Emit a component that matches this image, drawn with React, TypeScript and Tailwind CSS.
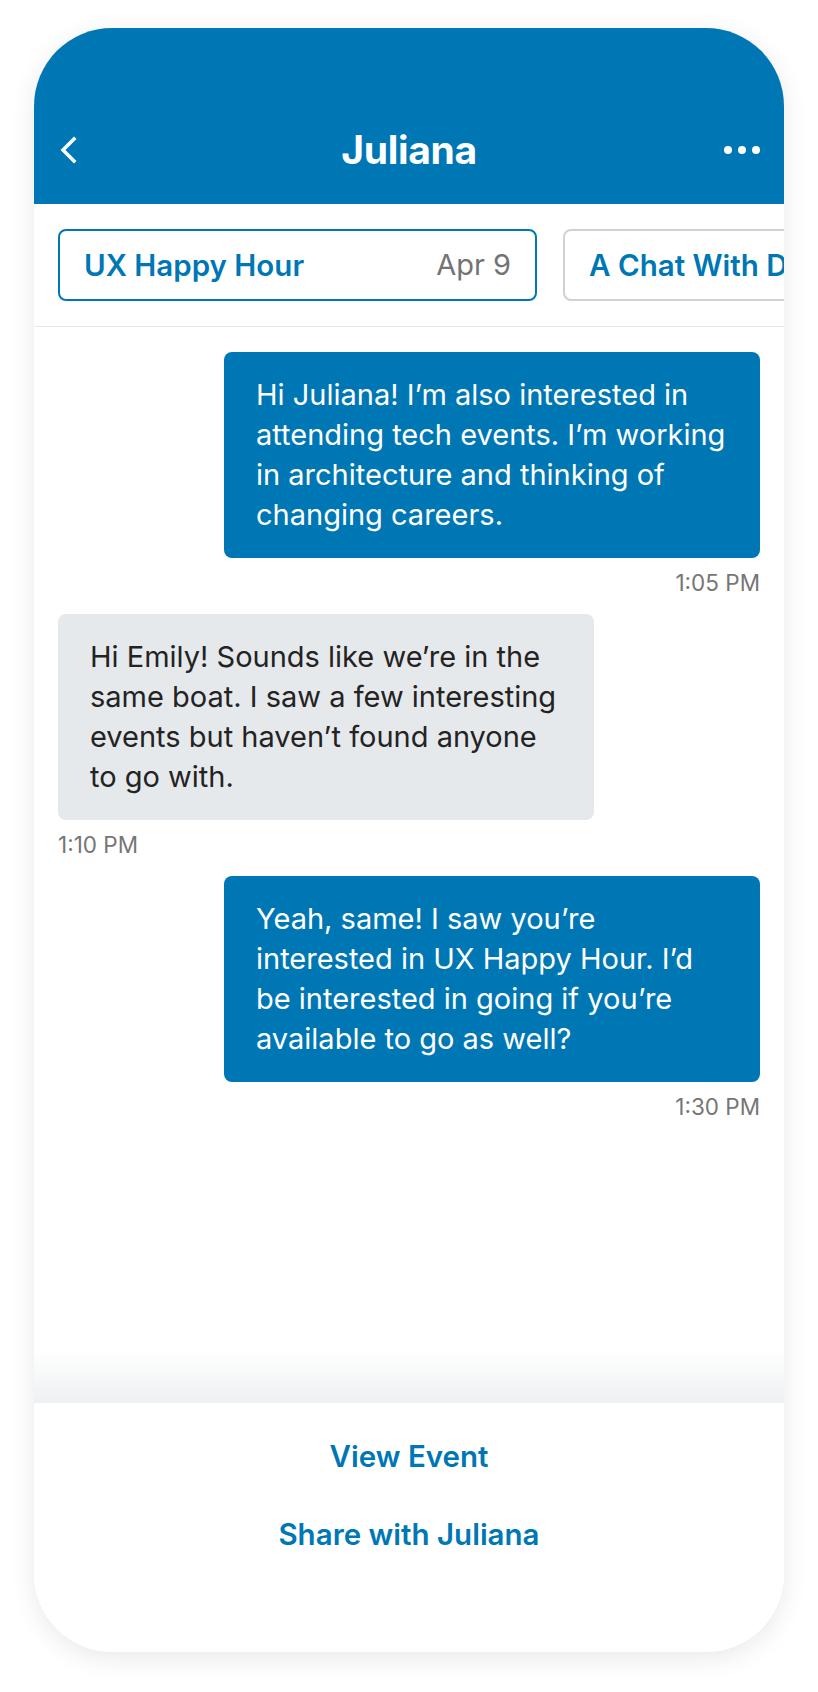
import React from 'react'

type Message = { id: number; mine: boolean; lines: string[]; time: string }

const messages: Message[] = [
  {
    id: 1,
    mine: true,
    lines: ['Hi Juliana! I’m also interested in', 'attending tech events. I’m working', 'in architecture and thinking of', 'changing careers.'],
    time: '1:05 PM',
  },
  {
    id: 2,
    mine: false,
    lines: ['Hi Emily! Sounds like we’re in the', 'same boat. I saw a few interesting', 'events but haven’t found anyone', 'to go with.'],
    time: '1:10 PM',
  },
  {
    id: 3,
    mine: true,
    lines: ['Yeah, same! I saw you’re', 'interested in UX Happy Hour. I’d', 'be interested in going if you’re', 'available to go as well?'],
    time: '1:30 PM',
  },
]

function Bubble({ m }: { m: Message }) {
  return (
    <div className={m.mine ? 'flex flex-col items-end' : 'flex flex-col items-start'}>
      <div
        className={
          m.mine
            ? 'w-[536px] rounded-[8px] bg-[#0077b5] px-[32px] py-[23px] text-white'
            : 'w-[536px] rounded-[8px] bg-[#e6e9ec] px-[32px] py-[23px] text-[#232323]'
        }
      >
        {m.lines.map((l) => (
          <p key={l} className="whitespace-nowrap text-[29px] leading-[40px]">
            {l}
          </p>
        ))}
      </div>
      <span className="mt-[12px] text-[22.5px] leading-[26px] text-[#767676]">{m.time}</span>
    </div>
  )
}

export default function App() {
  return (
    <div className="h-[1692px] w-[818px] bg-white pt-[28px] pl-[34px]" style={{ fontFamily: 'Inter, "Noto Sans", sans-serif' }}>
      <div className="flex h-[1624px] w-[750px] flex-col overflow-hidden rounded-[78px] bg-white shadow-[0_6px_26px_rgba(0,0,0,0.09)]">
        {/* header */}
        <div className="h-[176px] shrink-0 bg-[#0077b5] px-[24px] pt-[98px]">
          <div className="grid h-[48px] grid-cols-[80px_1fr_80px] items-center">
            <svg width="20" height="28" viewBox="0 0 20 28" fill="none">
              <path d="M16 3 L5 14 L16 25" stroke="white" strokeWidth="3.5" strokeLinecap="square" />
            </svg>
            <h1 className="text-center text-[39px] leading-[48px] font-bold tracking-[-0.3px] text-white">Juliana</h1>
            <div className="flex items-center justify-end gap-[6px]">
              <span className="h-[8px] w-[8px] rounded-full bg-white" />
              <span className="h-[8px] w-[8px] rounded-full bg-white" />
              <span className="h-[8px] w-[8px] rounded-full bg-white" />
            </div>
          </div>
        </div>

        {/* event tabs */}
        <div className="flex shrink-0 gap-[26px] border-b border-[#e6e9ec] pt-[25px] pb-[25px] pl-[24px]">
          <div className="flex h-[72px] w-[479px] shrink-0 items-center justify-between rounded-[8px] border-2 border-[#0077b5] px-[24px]">
            <span className="text-[29.5px] font-semibold text-[#0077b5]">UX Happy Hour</span>
            <span className="text-[29px] text-[#737373]">Apr 9</span>
          </div>
          <div className="flex h-[72px] w-[479px] shrink-0 items-center rounded-[8px] border-2 border-[#cfd2d5] px-[24px]">
            <span className="whitespace-nowrap text-[29.5px] font-semibold text-[#0077b5]">A Chat With D</span>
          </div>
        </div>

        {/* messages */}
        <div className="flex flex-1 flex-col gap-[18px] px-[24px] pt-[25px]">
          {messages.map((m) => (
            <Bubble key={m.id} m={m} />
          ))}
        </div>

        <div className="h-[53px] shrink-0 bg-gradient-to-b from-white to-[#eef0f2]" />

        {/* actions */}
        <div className="flex h-[249px] shrink-0 flex-col items-center gap-[38px] bg-white pt-[33px]">
          <button className="text-[29.5px] leading-[40px] font-semibold text-[#0077b5]">View Event</button>
          <button className="text-[29.5px] leading-[40px] font-semibold text-[#0077b5]">Share with Juliana</button>
        </div>
      </div>
    </div>
  )
}
